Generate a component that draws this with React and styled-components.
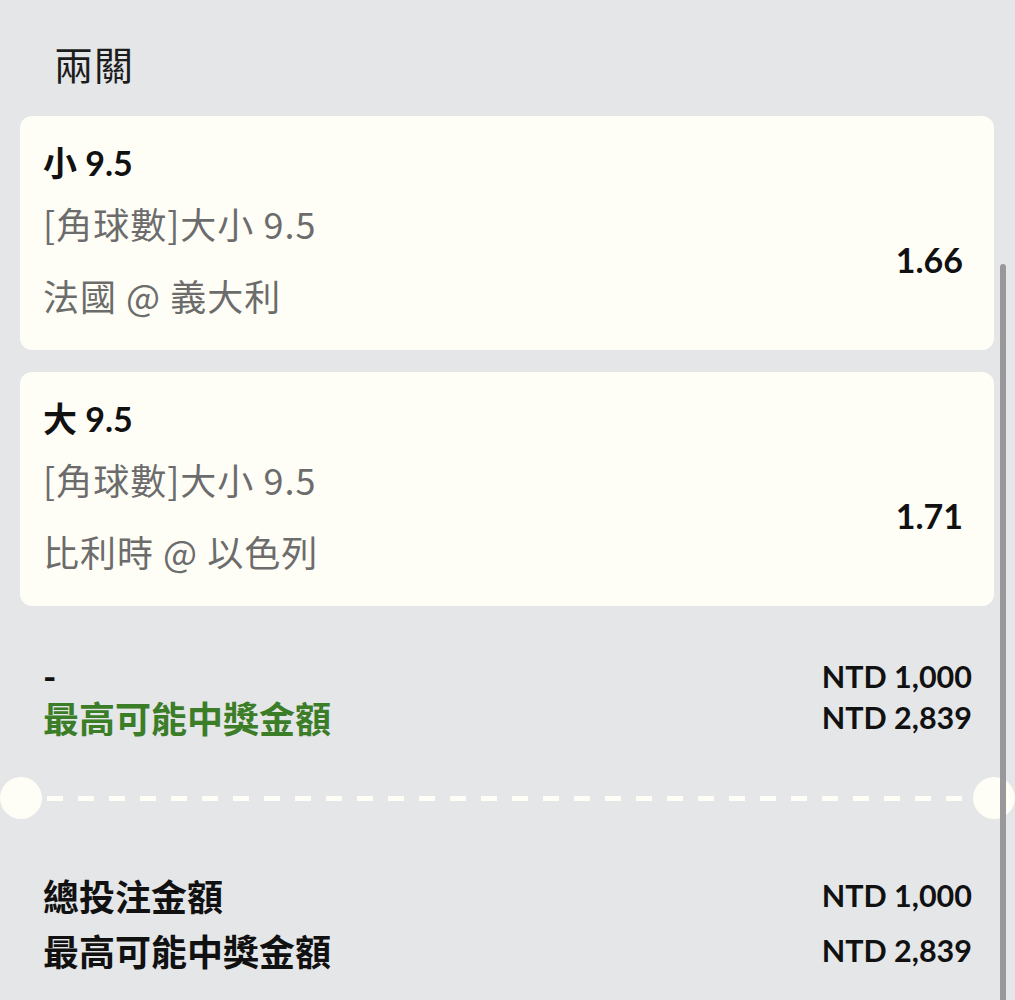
import styled, { createGlobalStyle } from "styled-components";

const GlobalStyle = createGlobalStyle`
    html, body {
        margin: 0;
        padding: 0;
        background: #e5e6e8;
        overflow: hidden;
    }
    body {
        font-family: Lato, "Noto Sans CJK TC", sans-serif;
        color: #111;
    }
`;

const bets = [
    { pick: "小 9.5", market: "[角球數]大小 9.5", match: "法國 @ 義大利", odds: "1.66" },
    { pick: "大 9.5", market: "[角球數]大小 9.5", match: "比利時 @ 以色列", odds: "1.71" },
];

const App = () => {
    return (
        <Page>
            <GlobalStyle />
            <Title>兩關</Title>
            <CardList>
                {bets.map((b) => (
                    <Card key={b.match}>
                        <Pick>{b.pick}</Pick>
                        <Info>{b.market}</Info>
                        <Info>{b.match}</Info>
                        <Odds>{b.odds}</Odds>
                    </Card>
                ))}
            </CardList>
            <Summary>
                <Row height={41}>
                    <Label>-</Label>
                    <Value>NTD 1,000</Value>
                </Row>
                <Row height={41}>
                    <Label green>最高可能中獎金額</Label>
                    <Value>NTD 2,839</Value>
                </Row>
            </Summary>
            <Divider>
                <Dot />
                <Dashes />
                <Dot />
            </Divider>
            <Totals>
                <Row height={52}>
                    <Label>總投注金額</Label>
                    <Value>NTD 1,000</Value>
                </Row>
                <Row height={52}>
                    <Label>最高可能中獎金額</Label>
                    <Value>NTD 2,839</Value>
                </Row>
            </Totals>
            <ScrollThumb />
        </Page>
    );
};

const Page = styled.div`
    position: relative;
    width: 1015px;
    height: 1000px;
    box-sizing: border-box;
    padding: 0 21px 0 20px;
    overflow: hidden;
`;

const Title = styled.h1`
    margin: 0 0 26px 0;
    padding: 39px 0 0 34px;
    height: 51px;
    font-family: "Noto Sans CJK TC", sans-serif;
    font-size: 39px;
    font-weight: 400;
    line-height: 48px;
    letter-spacing: 1px;
    color: #1c1c1c;
`;

const CardList = styled.div`
    display: flex;
    flex-direction: column;
    gap: 22px;
`;

const Card = styled.div`
    display: grid;
    grid-template-columns: 1fr auto;
    grid-template-rows: 48px 72px 72px;
    padding: 23px 31px 19px 23px;
    background: #fffef6;
    border-radius: 12px;
`;

const Pick = styled.div`
    grid-column: 1;
    font-family: Lato, "Noto Sans CJK TC", sans-serif;
    font-size: 34px;
    font-weight: 700;
    line-height: 48px;
    color: #111;
`;

const Info = styled.div`
    grid-column: 1;
    font-family: "Noto Sans CJK TC", sans-serif;
    font-size: 36px;
    font-weight: 400;
    line-height: 72px;
    letter-spacing: 1px;
    color: #6c6c6c;
`;

const Odds = styled.div`
    grid-column: 2;
    grid-row: 2 / 4;
    align-self: center;
    font-size: 34px;
    font-weight: 700;
    color: #111;
`;

const Summary = styled.div`
    padding: 49px 22px 0 23px;
`;

const Totals = styled.div`
    display: flex;
    flex-direction: column;
    gap: 3px;
    padding: 50px 22px 0 23px;
`;

const Row = styled.div`
    display: flex;
    justify-content: space-between;
    align-items: center;
    height: ${(p) => p.height}px;
`;

const Label = styled.span`
    font-family: Lato, "Noto Sans CJK TC", sans-serif;
    font-size: 36px;
    font-weight: 700;
    color: ${(p) => (p.green ? "#3c7d28" : "#111")};
`;

const Value = styled.span`
    font-family: Lato, sans-serif;
    font-size: 30.5px;
    font-weight: 700;
    color: #111;
`;

const Divider = styled.div`
    display: flex;
    align-items: center;
    margin: 40px -21px 0 -20px;
    height: 42px;
`;

const Dot = styled.div`
    flex: 0 0 42px;
    height: 42px;
    border-radius: 50%;
    background: #fffef6;
`;

const Dashes = styled.div`
    flex: 1;
    height: 5px;
    margin: 0 4px 0 5px;
    background: repeating-linear-gradient(
        to right,
        #fffef6 0,
        #fffef6 16px,
        transparent 16px,
        transparent 31px
    );
`;

const ScrollThumb = styled.div`
    position: absolute;
    top: 264px;
    bottom: -10px;
    right: 9px;
    width: 6px;
    border-radius: 3px;
    background: #98989b;
`;

export default App;
